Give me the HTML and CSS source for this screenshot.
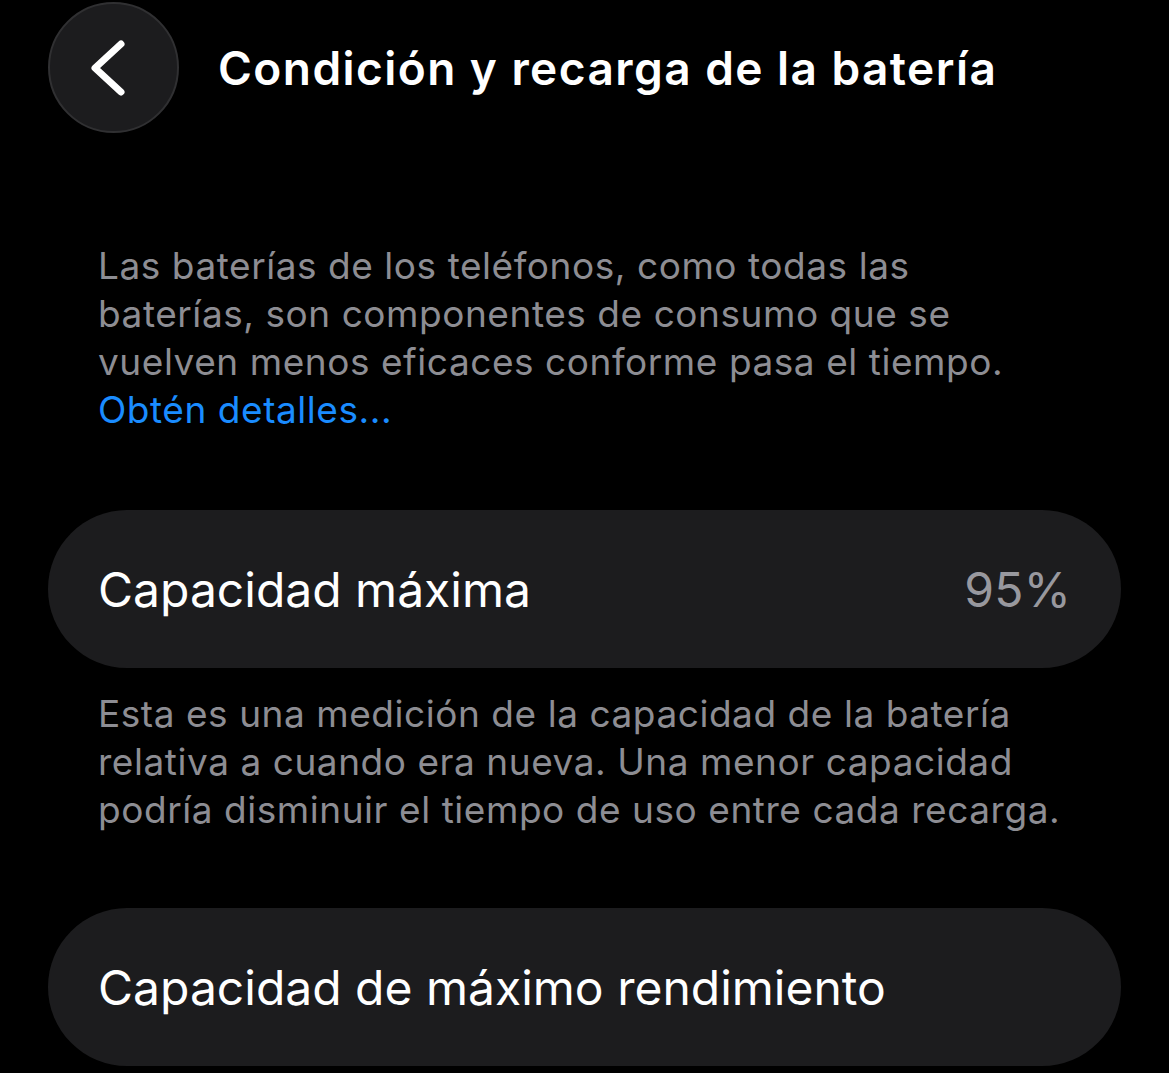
FILE: index.html
```html
<!DOCTYPE html>
<html lang="es">
<head>
    <meta charset="UTF-8">
    <meta name="viewport" content="width=device-width, initial-scale=1.0">
    <title>Condición y recarga de la batería</title>
    <link rel="stylesheet" href="styles.css">
</head>
<body>
    <div class="screen">
        <div class="header">
            <button class="back-btn" aria-label="Atrás">
                <svg width="131" height="131" viewBox="0 0 131 131">
                    <path d="M73 42 L47 66 L73 90" fill="none" stroke="#fff" stroke-width="7" stroke-linecap="round" stroke-linejoin="round"/>
                </svg>
            </button>
            <h1 class="title">Condición y recarga de la batería</h1>
        </div>

        <p class="note intro">Las baterías de los teléfonos, como todas las baterías, son componentes de consumo que se vuelven menos eficaces conforme pasa el tiempo. <a href="#" class="link">Obtén detalles...</a></p>

        <div class="card">
            <span class="card-label">Capacidad máxima</span>
            <span class="card-value">95%</span>
        </div>

        <p class="note">Esta es una medición de la capacidad de la batería relativa a cuando era nueva. Una menor capacidad podría disminuir el tiempo de uso entre cada recarga.</p>

        <div class="card card-last">
            <span class="card-label">Capacidad de máximo rendimiento</span>
        </div>
    </div>
</body>
</html>
```

FILE: styles.css
```css
body { margin: 0; background: #000; font-family: Inter, "Noto Sans", sans-serif; color: #fff; overflow: hidden; }
.screen { padding: 2px 48px 0 48px; }

.header { display: flex; align-items: center; gap: 39px; height: 131px; }
.back-btn { width: 131px; height: 131px; flex: none; border-radius: 50%; background: #1c1c1e; border: 2px solid #303032; padding: 0; display: flex; align-items: center; justify-content: center; }
.back-btn svg { flex: none; }
.title { margin: 0; font-size: 46px; font-weight: 600; letter-spacing: 1.45px; }

.note { margin: 22px 0 0 0; padding: 0 20px 0 50px; font-size: 37px; line-height: 48px; color: #8d8d93; letter-spacing: 0.55px; }
.intro { margin-top: 109px; padding-right: 83px; }
.link { color: #1a8cff; text-decoration: none; display: block; }

.card { display: flex; justify-content: space-between; align-items: center; height: 158px; margin-top: 76px; padding: 0 50px; border-radius: 79px; background: #1c1c1e; }
.card-last { margin-top: 74px; }
.card-label { font-size: 48px; letter-spacing: 0; }
.card-value { font-size: 48px; color: #98989e; letter-spacing: 0.2px; }
```
